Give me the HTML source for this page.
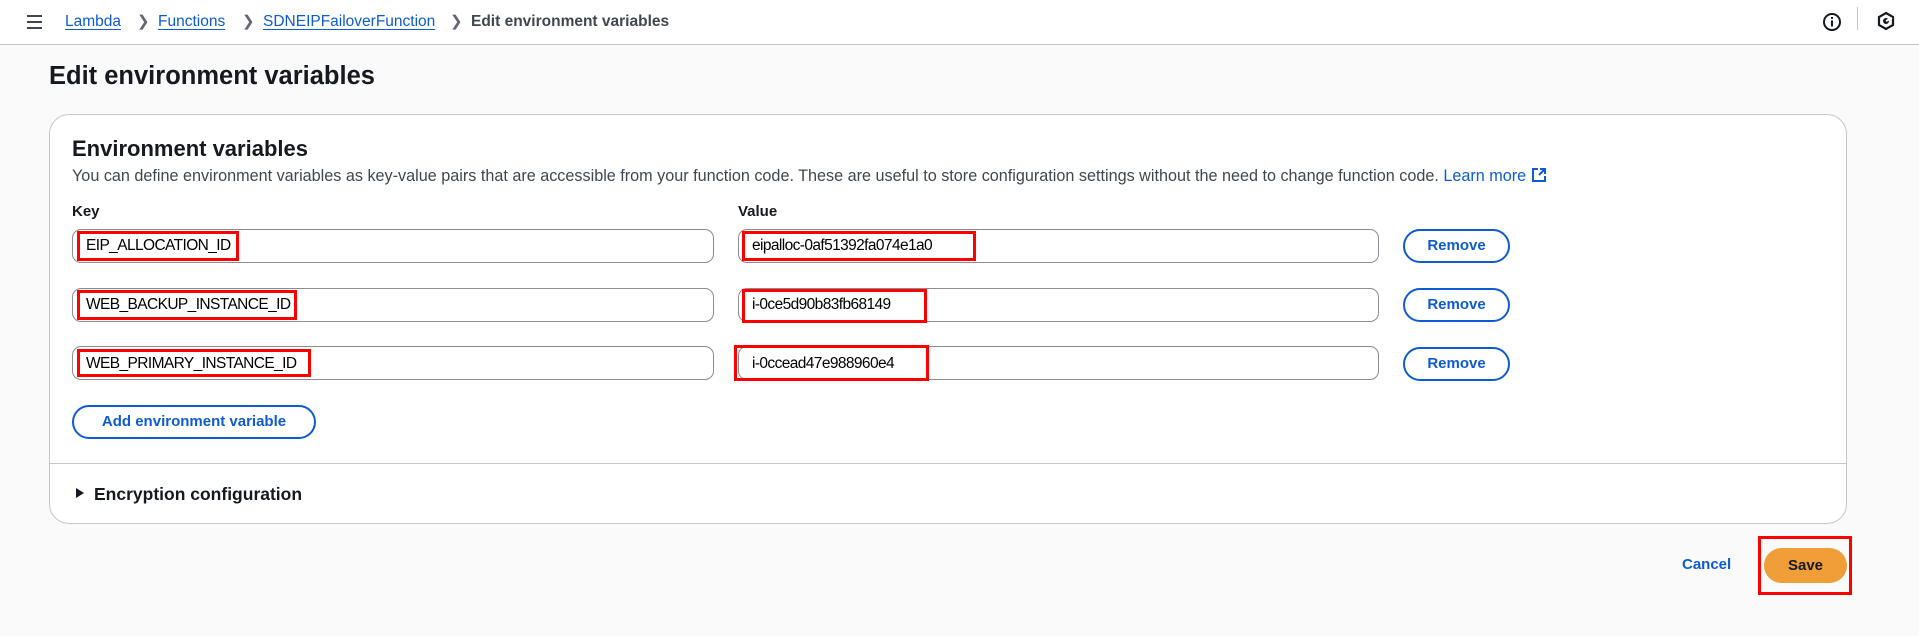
<!DOCTYPE html>
<html><head><meta charset="utf-8"><style>
*{box-sizing:border-box;margin:0;padding:0}
body{width:1919px;height:636px;background:#fafafa;font-family:"Liberation Sans",Arial,sans-serif;color:#16191f;position:relative;overflow:hidden}
.hdr{position:absolute;left:0;top:0;width:1919px;height:45px;background:#fff;border-bottom:1px solid #c6c6cd}
.abs{position:absolute;white-space:nowrap}
.bc{font-size:15.5px;top:13px}
.lnk{color:#0f5bd4;text-decoration:underline;text-underline-offset:3px}
.chev{color:#656871;font-size:15px;top:12px}
.card{position:absolute;left:49px;top:114px;width:1798px;height:410px;background:#fff;border:1px solid #c6c6cd;border-radius:20px}
.inp{position:absolute;height:34px;border:1px solid #8c8c94;border-radius:9px;background:#fff}
.txt{font-size:15.5px;color:#000;letter-spacing:-0.6px}
.red{position:absolute;border:3px solid #f00}
.btn{position:absolute;border:2px solid #0f5bd4;border-radius:18px;color:#0f5bd4;font-weight:bold;font-size:15px;text-align:center;background:#fff}
</style></head><body>
<div class="hdr"></div>
<div class="abs" style="left:27px;top:15px;width:15px">
<div style="height:2px;background:#414750;margin-bottom:4px"></div><div style="height:2px;background:#414750;margin-bottom:4px"></div><div style="height:2px;background:#414750"></div></div>
<span class="abs bc lnk" style="left:65px">Lambda</span>
<span class="abs chev" style="left:137px">&#x276F;</span>
<span class="abs bc lnk" style="left:158px">Functions</span>
<span class="abs chev" style="left:242px">&#x276F;</span>
<span class="abs bc lnk" style="left:263px">SDNEIPFailoverFunction</span>
<span class="abs chev" style="left:450px">&#x276F;</span>
<span class="abs bc" style="left:471px;color:#414750;font-weight:bold">Edit environment variables</span>
<svg class="abs" style="left:1822px;top:12px" width="20" height="20" viewBox="0 0 20 20"><circle cx="10" cy="10" r="8" fill="none" stroke="#16191f" stroke-width="2"/><rect x="9" y="8.5" width="2" height="6" fill="#16191f"/><rect x="9" y="5" width="2" height="2" fill="#16191f"/></svg>
<div class="abs" style="left:1857px;top:7px;width:1px;height:23px;background:#c6c6cd"></div>
<svg class="abs" style="left:1876px;top:11px" width="20" height="20" viewBox="0 0 20 20"><path d="M10 2 L17 6 V14 L10 18 L3 14 V6 Z" fill="none" stroke="#16191f" stroke-width="2.2"/><circle cx="10" cy="10" r="3" fill="#16191f"/><path d="M10 10 L16 7" stroke="#fff" stroke-width="2"/></svg>
<div class="abs" style="left:49px;top:62px;font-size:25.5px;font-weight:bold">Edit environment variables</div>
<div class="card"></div>
<div class="abs" style="left:72px;top:136px;font-size:22px;font-weight:bold">Environment variables</div>
<div class="abs" style="left:72px;top:167px;font-size:16.2px;color:#414750">You can define environment variables as key-value pairs that are accessible from your function code. These are useful to store configuration settings without the need to change function code. <span style="color:#0f5bd4">Learn more</span> <svg width="16" height="16" viewBox="0 0 16 16" style="vertical-align:-2px"><path d="M7 2H2V14H14V9" fill="none" stroke="#0f5bd4" stroke-width="2"/><path d="M9 2H14V7M14 2L8 8" fill="none" stroke="#0f5bd4" stroke-width="2"/></svg></div>
<div class="abs" style="left:72px;top:203px;font-size:15px;font-weight:bold">Key</div>
<div class="abs" style="left:738px;top:203px;font-size:15px;font-weight:bold">Value</div>

<div class="inp" style="left:72px;top:229px;width:642px"></div>
<div class="inp" style="left:72px;top:288px;width:642px"></div>
<div class="inp" style="left:72px;top:346px;width:642px"></div>
<div class="inp" style="left:738px;top:229px;width:641px"></div>
<div class="inp" style="left:738px;top:288px;width:641px"></div>
<div class="inp" style="left:738px;top:346px;width:641px"></div>

<span class="abs txt" style="left:86px;top:237px">EIP_ALLOCATION_ID</span>
<span class="abs txt" style="left:86px;top:296px">WEB_BACKUP_INSTANCE_ID</span>
<span class="abs txt" style="left:86px;top:355px">WEB_PRIMARY_INSTANCE_ID</span>
<span class="abs txt" style="left:752px;top:237px">eipalloc-0af51392fa074e1a0</span>
<span class="abs txt" style="left:752px;top:296px">i-0ce5d90b83fb68149</span>
<span class="abs txt" style="left:752px;top:355px">i-0ccead47e988960e4</span>

<div class="red" style="left:77px;top:231px;width:162px;height:30px"></div>
<div class="red" style="left:77px;top:290px;width:220px;height:30px"></div>
<div class="red" style="left:77px;top:349px;width:234px;height:28px"></div>
<div class="red" style="left:742px;top:231px;width:234px;height:30px"></div>
<div class="red" style="left:742px;top:289px;width:185px;height:34px"></div>
<div class="red" style="left:734px;top:345px;width:195px;height:36px"></div>

<div class="btn" style="left:1403px;top:229px;width:107px;height:34px;line-height:30px">Remove</div>
<div class="btn" style="left:1403px;top:288px;width:107px;height:34px;line-height:30px">Remove</div>
<div class="btn" style="left:1403px;top:347px;width:107px;height:34px;line-height:30px">Remove</div>
<div class="btn" style="left:72px;top:405px;width:244px;height:34px;line-height:30px">Add environment variable</div>

<div class="abs" style="left:50px;top:463px;width:1796px;height:1px;background:#c6c6cd"></div>
<svg class="abs" style="left:75px;top:487px" width="10" height="12" viewBox="0 0 10 12"><path d="M1 1 L9 6 L1 11 Z" fill="#16191f"/></svg>
<div class="abs" style="left:94px;top:484px;font-size:17.5px;font-weight:bold">Encryption configuration</div>

<div class="abs" style="left:1682px;top:556px;font-size:15px;font-weight:bold;color:#0f5bd4">Cancel</div>
<div class="abs" style="left:1764px;top:548px;width:83px;height:35px;border-radius:18px;background:#f09e38;font-size:15px;font-weight:bold;text-align:center;line-height:35px">Save</div>
<div class="red" style="left:1758px;top:536px;width:94px;height:59px"></div>
</body></html>
